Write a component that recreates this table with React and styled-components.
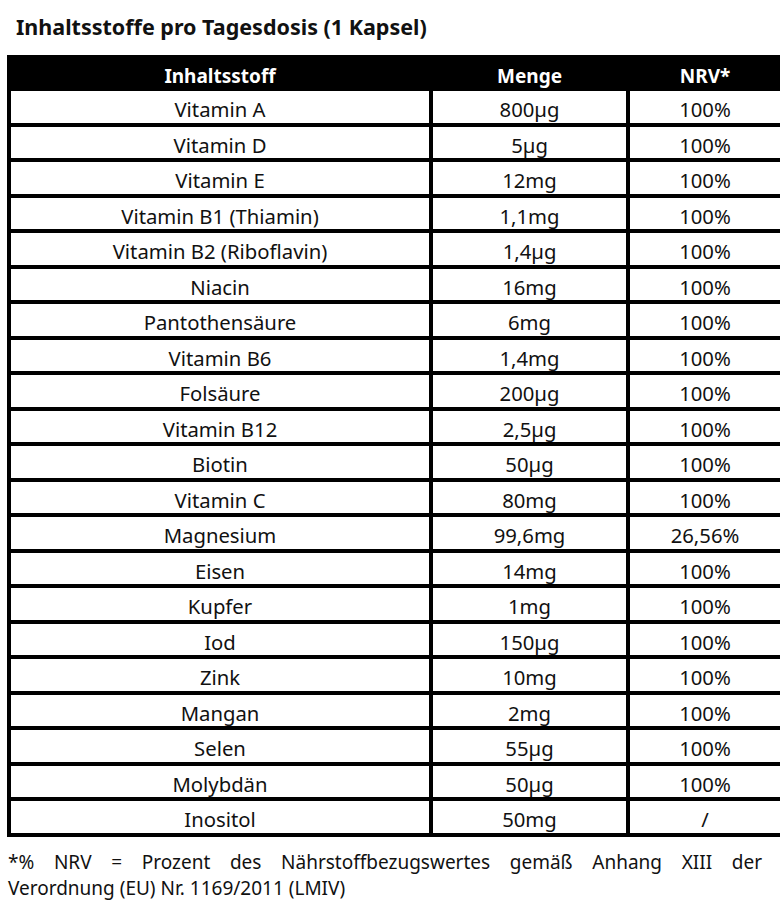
import React from "react";
import styled, { createGlobalStyle } from "styled-components";

const GlobalStyle = createGlobalStyle`
    html, body {
        margin: 0;
        padding: 0;
        background: #ffffff;
        overflow-x: hidden;
    }
`;

const rows = [
    ["Vitamin A", "800µg", "100%"],
    ["Vitamin D", "5µg", "100%"],
    ["Vitamin E", "12mg", "100%"],
    ["Vitamin B1 (Thiamin)", "1,1mg", "100%"],
    ["Vitamin B2 (Riboflavin)", "1,4µg", "100%"],
    ["Niacin", "16mg", "100%"],
    ["Pantothensäure", "6mg", "100%"],
    ["Vitamin B6", "1,4mg", "100%"],
    ["Folsäure", "200µg", "100%"],
    ["Vitamin B12", "2,5µg", "100%"],
    ["Biotin", "50µg", "100%"],
    ["Vitamin C", "80mg", "100%"],
    ["Magnesium", "99,6mg", "26,56%"],
    ["Eisen", "14mg", "100%"],
    ["Kupfer", "1mg", "100%"],
    ["Iod", "150µg", "100%"],
    ["Zink", "10mg", "100%"],
    ["Mangan", "2mg", "100%"],
    ["Selen", "55µg", "100%"],
    ["Molybdän", "50µg", "100%"],
    ["Inositol", "50mg", "/"],
];

export default function App() {
    return (
        <Page>
            <GlobalStyle />
            <Title>Inhaltsstoffe pro Tagesdosis (1 Kapsel)</Title>
            <Table>
                <HeaderRow>
                    <HeadCell>Inhaltsstoff</HeadCell>
                    <HeadCell>Menge</HeadCell>
                    <HeadCell>NRV*</HeadCell>
                </HeaderRow>
                {rows.map(([name, amount, nrv]) => (
                    <Row key={name}>
                        <Cell>{name}</Cell>
                        <Cell>{amount}</Cell>
                        <Cell>{nrv}</Cell>
                    </Row>
                ))}
            </Table>
            <Footnote>
                <FootLine $justify>*% NRV = Prozent des Nährstoffbezugswertes gemäß Anhang XIII der</FootLine>
                <FootLine>Verordnung (EU) Nr. 1169/2011 (LMIV)</FootLine>
            </Footnote>
        </Page>
    );
}

const Page = styled.div`
    width: 780px;
    overflow: hidden;
    padding: 13px 0 0 0;
`;

const Title = styled.h1`
    margin: 0 0 15px 16px;
    font-family: "Noto Sans", "Open Sans", sans-serif;
    font-weight: 700;
    font-size: 21.5px;
    line-height: 27px;
    color: #111;
`;

const Table = styled.div`
    margin-left: 7px;
    width: 777px;
    background: #000;
    padding: 0 4px 4px 4px;
    display: flex;
    flex-direction: column;
    gap: 4px;
`;

const columns = "418px 193px 150px";

const HeaderRow = styled.div`
    display: grid;
    grid-template-columns: ${columns};
    column-gap: 4px;
    height: 32px;
`;

const HeadCell = styled.div`
    display: flex;
    align-items: center;
    justify-content: center;
    padding-top: 8px;
    color: #fff;
    font-family: "Noto Sans", "Open Sans", sans-serif;
    font-weight: 700;
    font-size: 19px;
`;

const Row = styled.div`
    display: grid;
    grid-template-columns: ${columns};
    column-gap: 4px;
    height: 31.5px;
`;

const Cell = styled.div`
    background: #fff;
    display: flex;
    align-items: center;
    justify-content: center;
    padding-top: 5px;
    color: #111;
    font-family: "Noto Sans", "Open Sans", sans-serif;
    font-size: 20.3px;
    line-height: 1;
`;

const Footnote = styled.div`
    margin: 12px 18px 0 8px;
    font-family: "Noto Sans", "Open Sans", sans-serif;
    font-size: 19px;
    line-height: 26px;
    color: #111;
`;

const FootLine = styled.div`
    text-align: ${({ $justify }) => ($justify ? "justify" : "left")};
    text-align-last: ${({ $justify }) => ($justify ? "justify" : "left")};
`;
